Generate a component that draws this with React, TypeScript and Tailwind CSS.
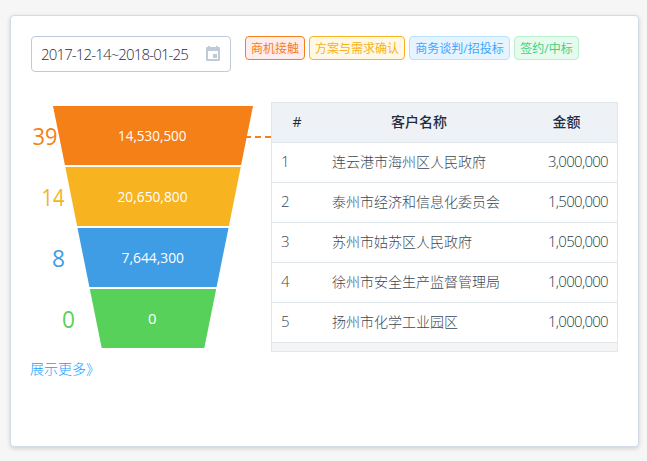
const latin = "font-['Open_Sans','Noto_Sans_CJK_SC',sans-serif]";

const tags = [
  { label: '商机接触', style: 'w-[60px] border-[#f77f1a] bg-[#ffecec] text-[#f77f1a]' },
  { label: '方案与需求确认', style: 'w-[96px] border-[#f7b320] bg-[#fff8e6] text-[#f7b320]' },
  { label: '商务谈判/招投标', style: 'w-[101px] border-[#b8e0ff] bg-[#e6f4ff] text-[#3da8ff]' },
  { label: '签约/中标', style: 'w-[65px] border-[#b8efcf] bg-[#e6faee] text-[#44d07c]' },
];

const stages = [
  { points: '22,0 222,0 210.1,59 33.9,59', color: '#f68018', count: '39', countX: 1.5, countW: 25, amount: '14,530,500', amountX: 87, amountW: 68.5 },
  { points: '34.3,61 209.7,61 197.9,120 46.1,120', color: '#f7b320', count: '14', countX: 10.5, countW: 23, amount: '20,650,800', amountX: 86.5, amountW: 70 },
  { points: '46.5,122 197.5,122 185.6,181 58.4,181', color: '#3e9de5', count: '8', countX: 21, countW: 13, amount: '7,644,300', amountX: 90.5, amountW: 62.5 },
  { points: '58.8,183 185.2,183 173.3,242 70.7,242', color: '#58d15b', count: '0', countX: 31, countW: 13, amount: '0', amountX: 117, amountW: 8.5 },
];

const rows = [
  ['连云港市海州区人民政府', '3,000,000'],
  ['泰州市经济和信息化委员会', '1,500,000'],
  ['苏州市姑苏区人民政府', '1,050,000'],
  ['徐州市安全生产监督管理局', '1,000,000'],
  ['扬州市化学工业园区', '1,000,000'],
];

function Funnel() {
  return (
    <svg width="240" height="242" viewBox="0 0 240 242" className="block shrink-0">
      {stages.map((s, i) => (
        <g key={s.color}>
          <polygon points={s.points} fill={s.color} />
          <text x={s.countX} y={39 + i * 61} textLength={s.countW} lengthAdjust="spacingAndGlyphs" fill={s.color} className="text-[24px]">
            {s.count}
          </text>
          <text x={s.amountX} y={35 + i * 61} textLength={s.amountW} lengthAdjust="spacingAndGlyphs" fill="#fff" className="text-[15px]">
            {s.amount}
          </text>
        </g>
      ))}
      <path d="M215 31H220M224 31H230M234 31H240" stroke="#f68018" strokeWidth="2" />
    </svg>
  );
}

function Table() {
  return (
    <div className="h-[250px] w-[347px] border border-[#dfe6ec] bg-[#f5f5f5] text-sm text-[#1f2d3d]">
      <div className="grid h-10 grid-cols-[50px_194px_101px] items-center border-b border-[#dfe6ec] bg-[#eef1f6] pb-px text-center font-medium">
        <span>#</span>
        <span>客户名称</span>
        <span>金额</span>
      </div>
      {rows.map(([name, amount], i) => (
        <div key={name} className="grid h-10 grid-cols-[50px_194px_101px] items-center border-b border-[#dfe6ec] bg-white pb-px font-light">
          <span className="pl-[9px] text-[15px] text-[#3c4856]">{i + 1}</span>
          <span className="pl-[10px] text-[#3c4856]">{name}</span>
          <span className="pr-[9px] text-right text-[15px] tracking-[-0.7px] text-[#2c3a49]">{amount}</span>
        </div>
      ))}
    </div>
  );
}

export default function App() {
  return (
    <div className={`h-[461px] w-[647px] bg-[#f6f6f6] pt-[15px] pl-[10px] ${latin}`}>
      <div className="h-[432px] w-[629px] rounded border border-[#d1dbe5] bg-white pt-5 pl-5 shadow-[0_2px_4px_rgba(0,0,0,0.12),0_0_6px_rgba(0,0,0,0.04)]">
        <div className="flex">
          <div className="flex h-9 w-[200px] items-center justify-between rounded border border-[#bfcbd9] pr-[9px] pl-[9px] text-[15px] font-light text-[#1f2d3d]">
            <span className="pt-px tracking-[-0.85px] whitespace-nowrap">2017-12-14~2018-01-25</span>
            <svg width="16" height="16" viewBox="0 0 16 16" className="block shrink-0">
              <path fillRule="evenodd" fill="#bfcbd9" d="M3 0h2v1h6V0h2v1h1q1 0 1 1v12q0 1-1 1H2q-1 0-1-1V2q0-1 1-1h1zM3 5v8h10V5z" />
              <path fill="#bfcbd9" d="M8 8h4v4H8z" />
            </svg>
          </div>
          <div className="ml-[14px] flex gap-1">
            {tags.map((t) => (
              <span key={t.label} className={`flex h-6 items-center justify-center rounded border pt-0.5 text-xs whitespace-nowrap ${t.style}`}>
                {t.label}
              </span>
            ))}
          </div>
        </div>
        <div className="mt-[30px] flex">
          <div className="pt-1">
            <Funnel />
            <a className="mt-[11px] -ml-px block text-sm leading-5 font-light text-[#20a0ff]">展示更多》</a>
          </div>
          <Table />
        </div>
      </div>
    </div>
  );
}
